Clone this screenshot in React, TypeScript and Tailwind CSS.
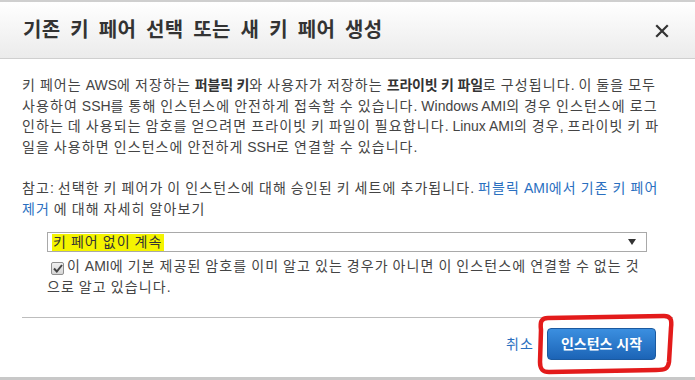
import React from "react";

const font = { fontFamily: '"Liberation Sans", "Noto Sans CJK KR", sans-serif' };

function K({ t }: { t: string }) {
  const parts = t.split(/([\uAC00-\uD7A3]+)/);
  return (
    <>
      {parts.map((p, i) =>
        /[\uAC00-\uD7A3]/.test(p) ? (
          <span key={i} className="tracking-[1.1px]">
            {p}
          </span>
        ) : (
          <React.Fragment key={i}>{p}</React.Fragment>
        )
      )}
    </>
  );
}

export default function App() {
  return (
    <div
      className="relative w-[695px] h-[380px] overflow-hidden bg-white flex flex-col"
      style={font}
    >
      <div className="h-[59px] shrink-0 border-t-2 border-b border-[#cfcfcf] bg-gradient-to-b from-white to-[#ebebeb] flex items-center justify-between pl-[23px] pr-[26px]">
        <h1 className="text-[20px] font-bold text-[#333] tracking-[0.3px] [word-spacing:4px] whitespace-nowrap">
          기존 키 페어 선택 또는 새 키 페어 생성
        </h1>
        <svg width="14" height="14" viewBox="0 0 14 14" className="mt-[2px]">
          <path d="M2 2 L12 12 M12 2 L2 12" stroke="#333" strokeWidth="2.2" strokeLinecap="square" />
        </svg>
      </div>

      <div className="px-[22px] pt-[16px] text-[14px] leading-[20.5px] text-[#444] whitespace-nowrap">
        <p>
          <K t="키 페어는 AWS에 저장하는 " />
          <b className="text-[#333] tracking-[-0.2px]">퍼블릭 키</b>
          <K t="와 사용자가 저장하는 " />
          <b className="text-[#333] tracking-[-0.2px]">프라이빗 키 파일</b>
          <K t="로 구성됩니다. 이 둘을 모두" />
          <br />
          <K t="사용하여 SSH를 통해 인스턴스에 안전하게 접속할 수 있습니다. Windows AMI의 경우 인스턴스에 로그" />
          <br />
          <K t="인하는 데 사용되는 암호를 얻으려면 프라이빗 키 파일이 필요합니다. Linux AMI의 경우, 프라이빗 키 파" />
          <br />
          <K t="일을 사용하면 인스턴스에 안전하게 SSH로 연결할 수 있습니다." />
        </p>
        <p className="mt-[21px]">
          <K t="참고: 선택한 키 페어가 이 인스턴스에 대해 승인된 키 세트에 추가됩니다. " />
          <span className="text-[#2a6fbf]"><K t="퍼블릭 AMI에서 기존 키 페어" /></span>
          <br />
          <span className="text-[#2a6fbf]"><K t="제거" /></span>
          <K t=" 에 대해 자세히 알아보기" />
        </p>

        <div className="ml-[25px] mt-[13px] w-[600px]">
          <div className="h-[20px] border border-[#a9a9a9] bg-white flex items-center justify-between pl-[4px] pr-[10px]">
            <span className="bg-[#f4f400] px-[1px] leading-[17px] text-[#333]"><K t="키 페어 없이 계속" /></span>
            <svg width="8" height="6" viewBox="0 0 8 6">
              <path d="M0 0 H8 L4 6 Z" fill="#333" />
            </svg>
          </div>
          <div className="mt-[4px]">
            <span className="inline-flex align-[-2px] items-center justify-center w-[13px] h-[13px] border border-[#8f8f8f] rounded-[2px] bg-gradient-to-b from-[#f0f0f0] to-[#d6d6d6] mx-[3px] ml-[4px]">
              <svg width="10" height="9" viewBox="0 0 10 9">
                <path d="M1 4.5 L3.8 7.5 L9 1" stroke="#444" strokeWidth="2" fill="none" />
              </svg>
            </span>
            <K t="이 AMI에 기본 제공된 암호를 이미 알고 있는 경우가 아니면 이 인스턴스에 연결할 수 없는 것" />
            <br />
            <K t="으로 알고 있습니다." />
          </div>
        </div>
      </div>

      <div className="mx-[22px] mt-[20px] border-t border-[#bdbdbd]" />

      <div className="flex items-center justify-end pr-[39px] mt-[10px]">
        <span className="text-[14px] text-[#2a6fbf] mr-[13px]"><K t="취소" /></span>
        <button className="w-[109px] h-[32px] rounded-[4px] border border-[#1b5aa0] bg-gradient-to-b from-[#3b8fe0] to-[#1c64b6] text-white text-[14px] font-bold">
          인스턴스 시작
        </button>
      </div>

      <div className="absolute left-0 right-0 bottom-0 h-[3px] bg-[#c8c8c8]" />

      <svg className="absolute left-0 top-0 pointer-events-none" width="695" height="380">
        <path
          d="M541 330 C540 322 541 318 548 318 L664 316 C671 316 672 320 671 328 L669 362 C668 369 665 370 656 370 L549 372 C542 372 540 369 540 362 Z"
          stroke="#e31b1b"
          strokeWidth="4.5"
          fill="none"
          strokeLinejoin="round"
        />
      </svg>
    </div>
  );
}
